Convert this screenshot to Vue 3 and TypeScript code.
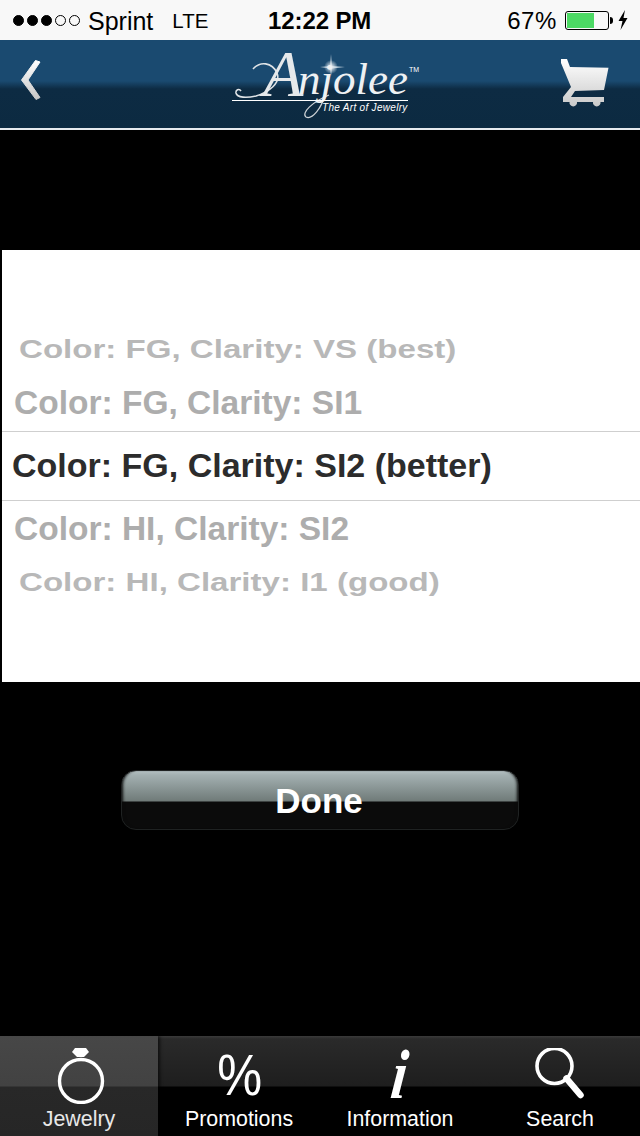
<template>
  <div class="screen">
    <div class="status-bar">
      <div class="status-left">
        <span class="signal">
          <i v-for="n in 5" :key="n" :class="{ on: n <= 3 }"></i>
        </span>
        <span class="carrier">Sprint</span>
        <span class="network">LTE</span>
      </div>
      <div class="clock">12:22 PM</div>
      <div class="status-right">
        <span class="percent">67%</span>
        <span class="battery"><span class="level"></span></span>
        <span class="battery-tip"></span>
        <svg class="bolt" width="10" height="20" viewBox="0 0 10 20">
          <path d="M7 0 L0.5 11 L4.5 11 L2.5 20 L9.5 8 L5.5 8 Z" fill="#000" />
        </svg>
      </div>
    </div>

    <header class="nav">
      <svg class="back" width="24" height="42" viewBox="0 0 24 42">
        <defs>
          <linearGradient id="backFill" x1="0" y1="0" x2="0" y2="1">
            <stop offset="0" stop-color="#ffffff" />
            <stop offset="1" stop-color="#c6c6c6" />
          </linearGradient>
        </defs>
        <path d="M16.5 1.5 L21 3 L9 21 L21 38.5 L17 40.5 L2.5 21 Z" fill="url(#backFill)" stroke="url(#backFill)" stroke-linejoin="round" />
      </svg>
      <div class="logo">
        <!-- swash, j tail and star of the logo -->
        <svg class="logo-art" width="190" height="80" viewBox="0 0 190 80">
          <defs>
            <radialGradient id="starGlow">
              <stop offset="0" stop-color="#ffffff" />
              <stop offset="1" stop-color="#ffffff" stop-opacity="0" />
            </radialGradient>
          </defs>
          <path d="M21 25 C28 17 40 18 45 29 C49 39 37 48 24 52 C15 54 5 54 4 49 C3.5 46 7 44 9 47" fill="none" stroke="#dfe3e6" stroke-width="1.6" />
          <path d="M93 50 C90 64 80 76 74 73 C69 69 80 58 97 51" fill="none" stroke="#cfd4d8" stroke-width="1.2" />
          <circle cx="99" cy="23" r="7" fill="url(#starGlow)" />
          <path d="M99 10 L100 22 L113 23 L100 24.5 L99 32 L98 24.5 L88 23 L98 22 Z" fill="#dfe8ef" opacity="0.8" />
        </svg>
        <span class="logo-a">A</span>
        <span class="logo-name">njolee</span>
        <span class="logo-tm">TM</span>
        <span class="logo-rule"></span>
        <span class="logo-tag">The Art of Jewelry</span>
      </div>
      <svg class="cart" width="50" height="50" viewBox="0 0 50 50">
        <defs>
          <linearGradient id="cartFill" x1="0" y1="0" x2="0" y2="1">
            <stop offset="0" stop-color="#ffffff" />
            <stop offset="1" stop-color="#c9c9c9" />
          </linearGradient>
        </defs>
        <path d="M0 0 L6 0 L9 8 L47.5 8.7 L43 31 L14 32 L10 38 L43 38 L43 43 L39.5 43 A3.8 3.8 0 1 1 32 43 L16 43 A3.8 3.8 0 1 1 8.5 43 L2 43 L2 38 L10 28 L0 4 Z" fill="url(#cartFill)" />
      </svg>
    </header>

    <main class="content">
      <section class="picker">
        <div
          v-for="row in rows"
          :key="row.text"
          class="picker-row"
          :class="row.kind"
        >
          <span class="picker-text">{{ row.text }}</span>
        </div>
      </section>
      <button class="done" type="button"><span>Done</span></button>
    </main>

    <nav class="tabs">
      <div class="tab active">
        <svg width="52" height="56" viewBox="0 0 52 56">
          <path d="M22 0 L33 0 L36 4 L31 9 L24 9 L19 4 Z" fill="#fff" />
          <circle cx="28" cy="33" r="21.5" fill="none" stroke="#fff" stroke-width="3.4" />
        </svg>
        <span>Jewelry</span>
      </div>
      <div class="tab">
        <span class="percent-icon">%</span>
        <span>Promotions</span>
      </div>
      <div class="tab">
        <span class="info-icon">i</span>
        <span>Information</span>
      </div>
      <div class="tab">
        <svg width="52" height="56" viewBox="0 0 52 56">
          <circle cx="20.5" cy="18" r="17.5" fill="none" stroke="#fff" stroke-width="3.6" />
          <path d="M32.5 30.5 L46.5 47" stroke="#fff" stroke-width="6.5" stroke-linecap="round" />
        </svg>
        <span>Search</span>
      </div>
    </nav>
  </div>
</template>

<script setup lang="ts">
interface PickerRow {
  text: string
  kind: string
}

const rows: PickerRow[] = [
  { text: 'Color: FG, Clarity: VS (best)', kind: 'far' },
  { text: 'Color: FG, Clarity: SI1', kind: 'near' },
  { text: 'Color: FG, Clarity: SI2 (better)', kind: 'selected' },
  { text: 'Color: HI, Clarity: SI2', kind: 'near after' },
  { text: 'Color: HI, Clarity: I1 (good)', kind: 'far' }
]
</script>

<style>
html,
body {
  margin: 0;
  background: #000;
}
</style>

<style scoped>
.screen {
  width: 640px;
  height: 1136px;
  display: flex;
  flex-direction: column;
  background: #000;
  overflow: hidden;
  font-family: 'Liberation Sans', Arial, sans-serif;
}

.status-bar {
  height: 40px;
  flex: none;
  position: relative;
  display: flex;
  align-items: center;
  justify-content: space-between;
  background: #f8f8f8;
  color: #000;
  font-size: 25px;
  padding: 2px 12px 0 13px;
  box-sizing: border-box;
}

.status-left,
.status-right {
  display: flex;
  align-items: center;
}

.signal {
  display: flex;
  gap: 3px;
  margin-right: 8px;
  margin-top: -2px;
}

.signal i {
  width: 9px;
  height: 9px;
  border: 1px solid #000;
  border-radius: 50%;
}

.signal i.on {
  background: #000;
}

.network {
  margin-left: 19px;
  font-size: 20.5px;
}

.clock {
  position: absolute;
  left: 268px;
  font-size: 24px;
  font-weight: 700;
  letter-spacing: -0.1px;
}

.percent {
  margin-right: 8px;
  font-size: 24px;
  letter-spacing: 0.6px;
}

.battery {
  width: 44px;
  height: 19px;
  margin-top: -2px;
  border: 1px solid #000;
  border-radius: 3px;
  padding: 1px;
  display: block;
  box-sizing: border-box;
}

.level {
  display: block;
  width: 27px;
  height: 100%;
  background: #4cd964;
}

.battery-tip {
  width: 3px;
  height: 7px;
  margin: -2px 5px 0 1px;
  background: #000;
  border-radius: 0 3px 3px 0;
}

.bolt {
  margin-top: -2px;
}

.nav {
  height: 90px;
  flex: none;
  display: flex;
  align-items: center;
  justify-content: space-between;
  box-sizing: border-box;
  padding: 0 29px 0 19px;
  border-bottom: 2px solid #e6eaee;
  background: linear-gradient(#1a4a70 0, #1a4a70 41px, #0d2b43 49px, #0c2a41 100%);
}

.back {
  margin-top: -8px;
}

.logo {
  position: relative;
  margin-left: 43px;
  width: 183px;
  height: 80px;
  color: #fff;
}

.logo-art {
  position: absolute;
  left: 0;
  top: 0;
}

.logo-a {
  position: absolute;
  left: 31px;
  top: -3px;
  font-family: 'Liberation Serif', serif;
  font-style: italic;
  font-size: 66px;
  line-height: 66px;
  color: #e6e9eb;
}

.logo-name {
  position: absolute;
  left: 66px;
  top: 12px;
  font-family: 'Liberation Serif', serif;
  font-style: italic;
  font-size: 45px;
  line-height: 46px;
  color: #eef1f3;
  white-space: nowrap;
}

.logo-tm {
  position: absolute;
  left: 177px;
  top: 22px;
  font-size: 7px;
}

.logo-rule {
  position: absolute;
  left: 0;
  top: 56px;
  width: 176px;
  height: 1px;
  background: #fff;
}

.logo-tag {
  position: absolute;
  left: 90px;
  top: 58px;
  font-size: 10px;
  font-style: italic;
  letter-spacing: 0.3px;
  white-space: nowrap;
}

.cart {
  margin-top: -1px;
}

.content {
  flex: 1;
  display: flex;
  flex-direction: column;
  align-items: center;
  padding-top: 120px;
}

.picker {
  align-self: stretch;
  margin-left: 2px;
  height: 432px;
  background: #fff;
  display: flex;
  flex-direction: column;
  padding-top: 74px;
  box-sizing: border-box;
}

.picker-row {
  display: flex;
  align-items: center;
  white-space: nowrap;
  font-weight: 700;
}

.picker-text {
  display: block;
  transform-origin: left center;
}

.far {
  height: 50px;
  padding-left: 17px;
  font-size: 27px;
  color: #b8b8b8;
}

.far .picker-text {
  transform: scale(1.225, 0.95);
}

.near {
  height: 57px;
  padding-left: 12px;
  font-size: 33.5px;
  color: #adadad;
}

.near.after {
  height: 56px;
}

.selected {
  height: 67px;
  padding-left: 10px;
  padding-bottom: 1px;
  font-size: 34px;
  color: #2c2c2c;
  border-top: 1px solid #cfcfcf;
  border-bottom: 1px solid #cfcfcf;
}

.done {
  margin-top: 88px;
  width: 398px;
  height: 60px;
  padding: 2px 2px 0 0;
  border: 1px solid #1f2222;
  border-radius: 15px;
  background: linear-gradient(#b4c0c2 0, #a3b0b1 4px, #707b79 30px, #0b0b0b 31px, #0b0b0b 100%);
  box-shadow: inset 3px 0 3px -2px #0b0b0b, inset -3px 0 3px -2px #0b0b0b;
  color: #fff;
  font-family: inherit;
  font-size: 35px;
  font-weight: 700;
}

.tabs {
  height: 100px;
  flex: none;
  display: grid;
  grid-template-columns: 158px 162px 160px 160px;
  background: linear-gradient(#3a3a3a 0, #2a2a2a 3px, #1e1e1e 50px, #000 51px, #000 100%);
}

.tab {
  display: flex;
  flex-direction: column;
  align-items: center;
  justify-content: flex-end;
  height: 100px;
  padding-bottom: 4px;
  box-sizing: border-box;
  color: #fff;
  font-size: 21.4px;
  line-height: 26px;
}

.tab.active {
  color: #e8e8e8;
  background: linear-gradient(#474747 0, #424242 50px, #282828 51px, #262626 100%);
  box-shadow: 2px 0 3px rgba(0, 0, 0, 0.6);
}

.tab svg {
  margin-bottom: 2px;
}

.percent-icon {
  font-size: 58px;
  line-height: 58px;
  transform: translate(1px, -2px) scaleX(0.87);
}

.info-icon {
  font-family: 'Liberation Serif', serif;
  font-style: italic;
  font-size: 70px;
  line-height: 58px;
  font-weight: 700;
  transform: translateY(-2px) scaleX(0.8) skewX(-8deg);
}
</style>
